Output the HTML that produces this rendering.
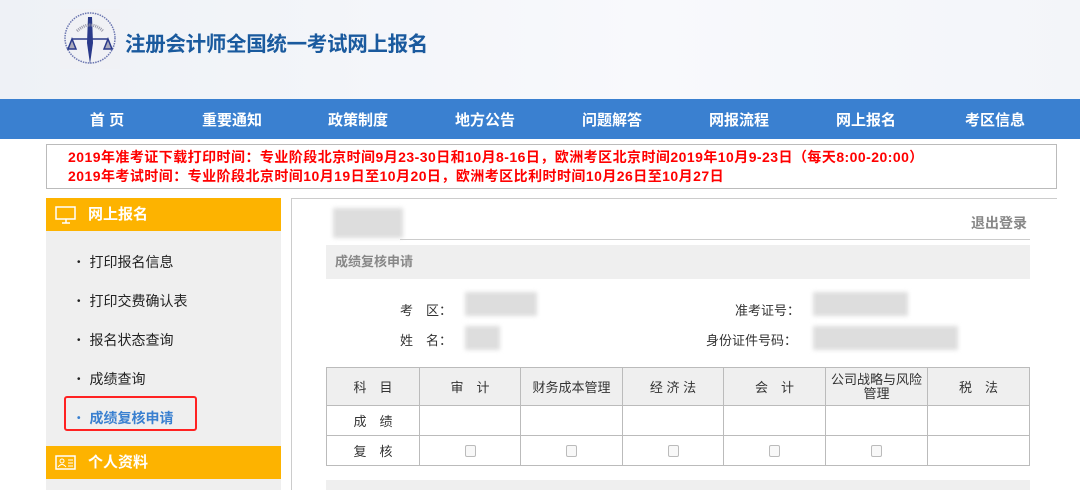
<!DOCTYPE html>
<html><head><meta charset="utf-8"><style>
*{margin:0;padding:0;box-sizing:border-box}
body{width:1080px;height:490px;overflow:hidden;background:#fff;font-family:"Liberation Sans","Noto Sans CJK SC",sans-serif;position:relative}
.a{position:absolute}
#hd{left:0;top:0;width:1080px;height:99px;background:linear-gradient(90deg,#eef1f6,#f8f9fc 60%,#f3f5f9)}
#nav{left:0;top:99px;width:1080px;height:40px;background:#3a80d0}
#nav span{position:absolute;top:10px;color:#fff;font-weight:bold;font-size:15px;transform:translateX(-50%);white-space:nowrap}
#nt{left:46px;top:144px;width:1011px;height:45px;border:1px solid #bbb;color:#f00;font-weight:bold;font-size:14px;line-height:19px;padding:3px 0 0 21px;white-space:nowrap;letter-spacing:.45px}
.sh{left:46px;width:235px;height:33px;background:#fdb300;color:#fff;font-weight:bold;font-size:15px;line-height:33px;padding-left:42px}
.li{left:77px;font-size:14px;color:#222}
.li:before{content:"•";font-size:10px;margin-right:9px;vertical-align:2px}
table{border-collapse:collapse;position:absolute;left:326px;top:367px;width:704px;font-size:13px;color:#333}
td{border:1px solid #bbb;text-align:center}
.b{background:#ddd;filter:blur(2px)}
.cb{display:inline-block;width:11px;height:12px;border:1px solid #bbb;border-radius:2px;background:#f8f8f8;margin-top:4px}
</style></head><body>
<div id="hd" class="a"></div>
<svg class="a" style="left:60px;top:9px" width="60" height="60" viewBox="0 0 60 60">
<rect width="60" height="60" fill="#f0f1f5"/>
<circle cx="30" cy="29" r="25" fill="none" stroke="#6b76b0" stroke-width="1.5" stroke-dasharray="1.5 1"/>
<path d="M28 8 L32 8 L33 34 L30 55 L27 34Z" fill="#2a3a8a"/>
<path d="M12 30 L48 30 M12 30 L8 40 L16 40Z M48 30 L44 40 L52 40Z" stroke="#2a3a8a" stroke-width="1.5" fill="#aab"/>
<path d="M17 22 Q30 10 43 22" stroke="#99a" fill="none" stroke-width="3" stroke-dasharray="1 1"/>
</svg>
<div class="a" style="left:125px;top:27px;font-size:20.5px;font-weight:bold;color:#1a5a9e;letter-spacing:-.3px">注册会计师全国统一考试网上报名</div>
<div id="nav" class="a">
<span style="left:107px">首 页</span><span style="left:232px">重要通知</span><span style="left:358px">政策制度</span><span style="left:485px">地方公告</span><span style="left:612px">问题解答</span><span style="left:739px">网报流程</span><span style="left:866px">网上报名</span><span style="left:995px">考区信息</span>
</div>
<div id="nt" class="a">2019年准考证下载打印时间：专业阶段北京时间9月23-30日和10月8-16日，欧洲考区北京时间2019年10月9-23日（每天8:00-20:00）<br>2019年考试时间：专业阶段北京时间10月19日至10月20日，欧洲考区比利时时间10月26日至10月27日</div>
<div class="a" style="left:46px;top:231px;width:235px;height:259px;background:#efefef"></div>
<div class="a sh" style="top:198px">网上报名</div>
<svg class="a" style="left:55px;top:206px" width="22" height="18"><rect x="1" y="1" width="19" height="12" fill="none" stroke="#fff" stroke-width="1.5"/><path d="M7 17h8M11 13v4" stroke="#fff" stroke-width="1.5"/></svg>
<div class="a sh" style="top:446px">个人资料</div>
<svg class="a" style="left:55px;top:455px" width="22" height="16"><rect x="1" y="1" width="19" height="13" fill="none" stroke="#fff" stroke-width="1.5"/><circle cx="7" cy="6" r="2" fill="none" stroke="#fff"/><path d="M3 12q4-5 8 0M13 5h5M13 8h5M13 11h5" stroke="#fff" fill="none"/></svg>
<div class="a li" style="top:252px">打印报名信息</div>
<div class="a li" style="top:291px">打印交费确认表</div>
<div class="a li" style="top:330px">报名状态查询</div>
<div class="a li" style="top:369px">成绩查询</div>
<div class="a li" style="top:408px;color:#3a80d0;font-weight:bold">成绩复核申请</div>
<div class="a" style="left:64px;top:396px;width:133px;height:35px;border:2px solid #f22;border-radius:3px"></div>
<div class="a" style="left:291px;top:198px;width:766px;height:292px;border-left:1px solid #ccc;border-top:1px solid #ccc"></div>
<div class="a b" style="left:333px;top:208px;width:70px;height:30px;background:#ddd"></div>
<div class="a" style="left:971px;top:213px;font-size:14px;color:#888;font-weight:bold">退出登录</div>
<div class="a" style="left:400px;top:239px;width:630px;border-top:1px solid #ccc"></div>
<div class="a" style="left:326px;top:245px;width:704px;height:34px;background:#efefef;color:#888;font-size:13px;font-weight:bold;line-height:34px;padding-left:9px">成绩复核申请</div>
<div class="a" style="left:400px;top:300px;font-size:13px;color:#333">考　区：</div>
<div class="a" style="left:400px;top:330px;font-size:13px;color:#333">姓　名：</div>
<div class="a" style="left:735px;top:300px;font-size:13px;color:#333">准考证号：</div>
<div class="a" style="left:706px;top:330px;font-size:13px;color:#333">身份证件号码：</div>
<div class="a b" style="left:465px;top:292px;width:72px;height:24px"></div>
<div class="a b" style="left:465px;top:326px;width:35px;height:24px"></div>
<div class="a b" style="left:813px;top:292px;width:95px;height:24px"></div>
<div class="a b" style="left:813px;top:326px;width:145px;height:24px"></div>
<table>
<tr style="height:38px;background:#efefef"><td style="width:93px">科　目</td><td style="width:101px">审　计</td><td style="width:102px">财务成本管理</td><td style="width:101px">经 济 法</td><td style="width:102px">会　计</td><td style="width:102px;line-height:14px">公司战略与风险管理</td><td>税　法</td></tr>
<tr style="height:30px"><td>成　绩</td><td></td><td></td><td></td><td></td><td></td><td></td></tr>
<tr style="height:30px"><td>复　核</td><td><span class="cb"></span></td><td><span class="cb"></span></td><td><span class="cb"></span></td><td><span class="cb"></span></td><td><span class="cb"></span></td><td></td></tr>
</table>
<div class="a" style="left:326px;top:480px;width:704px;height:10px;background:#efefef"></div>
</body></html>
